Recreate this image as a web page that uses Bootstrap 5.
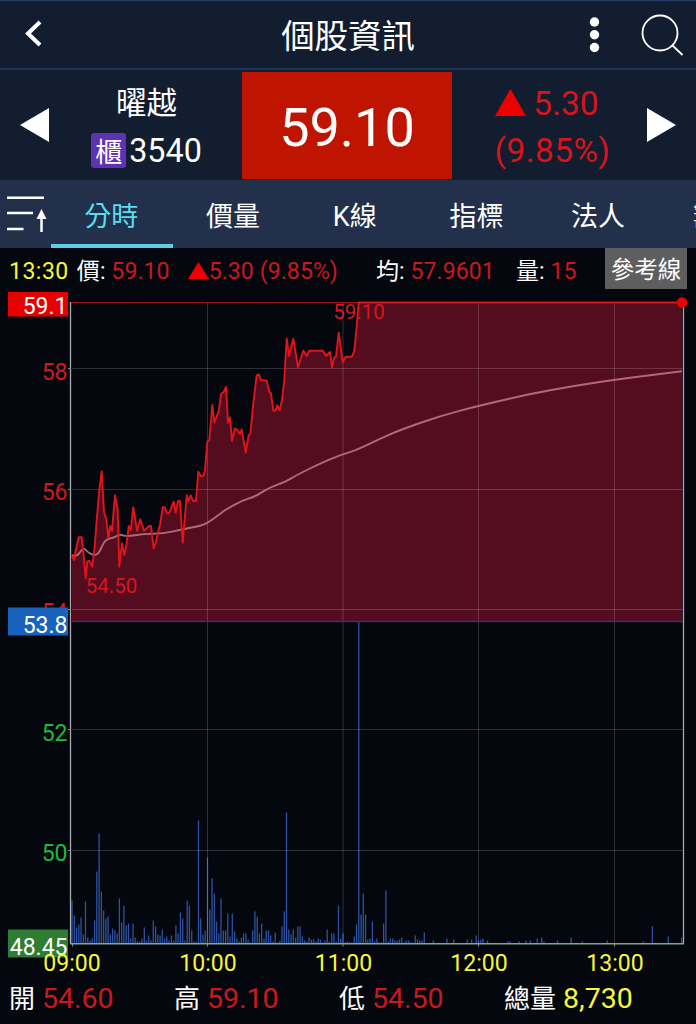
<!DOCTYPE html>
<html lang="zh-Hant">
<head>
    <meta charset="UTF-8" />
    <meta name="viewport" content="width=device-width, initial-scale=1" />
    <title>個股資訊</title>
    <link href="https://cdn.jsdelivr.net/npm/bootstrap@5.3.0/dist/css/bootstrap.min.css" rel="stylesheet" />
    <style>
        body {
            background: #05070f;
            color: #fff;
            font-family: Roboto, "Noto Sans CJK TC", sans-serif;
            line-height: 1;
            overflow: hidden;
        }
        svg { display: block; flex: none; }

        .topbar { height: 70px; background: #121d2f; border-top: 1px solid #263c66; border-bottom: 2px solid #22335a; }
        .topbar h1 { font-size: 33.4px; font-weight: 400; line-height: 1; padding-top: 4px; }
        .side { width: 204px; }

        .quote { height: 110px; background: #121d2f; }
        .quote .side-cell { width: 242px; }
        .stock-block { padding: 7px 0 0 1px; gap: 14px; }
        .stock-name { font-size: 30.5px; }
        .stock-code { font-size: 32.3px; }
        .code-no { margin-left: 3px; padding-top: 1px; }
        .market { width: 35px; height: 35px; background: #5f31b4; border-radius: 3px; font-size: 27px; line-height: 40px; text-align: center; }
        .price-box { width: 210px; height: 107px; padding-top: 5px; background: #bf1500; font-size: 54px; }
        .change { color: #d5141b; font-size: 33.5px; line-height: 47px; padding: 4px 0 0 3px; }
        .change svg { position: relative; top: -1px; }
        .change .percent { letter-spacing: .4px; padding-left: 3px; }

        .tabs { height: 68px; background: #22304b; }
        .tabs .nav-link { flex: 0 0 121.7px; padding: 7px 1px 0 0; color: #fff; font-size: 27px; text-align: center; border-bottom: 4px solid transparent; line-height: 60px; }
        .tabs .nav-link.active { color: #5adcf0; border-color: #5ccfe8; }

        .info { height: 44px; font-size: 23px; padding: 0 9px; letter-spacing: .1px; }
        .info > span { white-space: pre; padding-top: 2px; }
        .i-time { letter-spacing: .5px; }
        .i-price { margin-left: 8px; }
        .i-price + svg { margin-left: 18px; }
        .i-avg { margin-left: 38px; }
        .i-vol { margin-left: 21px; }
        .red { color: #c9181e; }
        .yellow { color: #f7f73b; }
        .ref-btn { width: 82px; height: 41px; background: #5e5e5e; color: #fff; font-size: 23.5px; line-height: 45px; padding: 0; border: 0; border-radius: 0; align-self: flex-start; letter-spacing: 0; }

        #chart text { font-size: 23px; }
        #chart .hi-lo text { font-size: 20.6px; }

        .totals { height: 44px; font-size: 28.5px; padding: 5px 0 0 9px; }
        .totals > span { flex: 0 0 165px; }
        .totals b { font-size: 26px; font-weight: 400; margin-right: 7px; }
    </style>
</head>
<body>
    <header class="topbar d-flex align-items-center justify-content-between">
        <div class="side">
            <svg width="60" height="50" fill="none" stroke="#fff" stroke-width="4"><path d="M40 12 28 23.500 40 35"/></svg>
        </div>
        <h1 class="m-0">個股資訊</h1>
        <div class="side d-flex justify-content-end">
            <svg width="120" height="60" fill="none" stroke="#fff" stroke-width="1.800">
                <g fill="#fff" stroke="none"><circle cx="18.500" cy="17" r="4.700"/><circle cx="18.500" cy="29.700" r="4.700"/><circle cx="18.500" cy="42.500" r="4.700"/></g>
                <circle cx="84" cy="28" r="17.500"/><path d="m96 40 10.500 10"/>
            </svg>
        </div>
    </header>

    <section class="quote d-flex align-items-center">
        <div class="side-cell d-flex align-items-center">
            <svg width="50" height="34"><path d="M20 17 49 0v34z" fill="#fff"/></svg>
            <div class="d-flex flex-column align-items-center flex-fill stock-block">
                <div class="stock-name">曜越</div>
                <div class="d-flex align-items-center stock-code"><span class="market">櫃</span><span class="code-no">3540</span></div>
            </div>
        </div>
        <div class="price-box d-flex align-items-center justify-content-center"><span>59.10</span></div>
        <div class="side-cell d-flex align-items-center flex-fill">
            <div class="change flex-fill text-center">
                <div class="d-flex align-items-center justify-content-center pe-2"><svg width="38" height="27"><path d="M15.500 0 31 27H0z" fill="#ee0000"/></svg><span>5.30</span></div>
                <div class="percent">(9.85%)</div>
            </div>
            <svg width="49" height="34"><path d="M0 0 29 17 0 34z" fill="#fff"/></svg>
        </div>
    </section>

    <nav class="tabs d-flex overflow-hidden">
        <svg width="51" height="68" fill="none" stroke="#fff" stroke-width="2.500">
            <path d="M7 17.700h37M7 33h26M7 49h16.500M41.500 52V36"/><path d="m41.500 29 5 10h-10z" fill="#fff" stroke="none"/>
        </svg>
        <a class="nav-link active">分時</a>
        <a class="nav-link">價量</a>
        <a class="nav-link">K線</a>
        <a class="nav-link">指標</a>
        <a class="nav-link">法人</a>
        <a class="nav-link">籌碼</a>
    </nav>

    <div class="info d-flex align-items-center">
        <span class="yellow i-time">13:30</span>
        <span class="i-price">價: <span class="red">59.10</span></span>
        <svg width="21" height="17"><path d="M10.500 0 21 17H0z" fill="#ee0000"/></svg>
        <span class="red">5.30 (9.85%)</span>
        <span class="i-avg">均: <span class="red">57.9601</span></span>
        <span class="i-vol">量: <span class="red">15</span></span>
        <button class="btn ref-btn ms-auto">參考線</button>
    </div>

    <svg id="chart" width="696" height="688" viewBox="0 292 696 688"></svg>

    <footer class="totals d-flex">
        <span><b>開</b><span class="red">54.60</span></span>
        <span><b>高</b><span class="red">59.10</span></span>
        <span><b>低</b><span class="red">54.50</span></span>
        <span><b>總量</b><span class="yellow">8,730</span></span>
    </footer>

<script>
    const X0 = 72, Y_BASE = 621.5, Y_BOTTOM = 943.5, MINUTE = 2.2583;

    // price line, x,y
    const price = `72,556 74,560 75.3,552.7 76.7,546 78.7,537.3 81.7,537.3 83.3,551.7 85.7,578.3 87.3,561.7 89.3,560.7
        92.3,566.7 94.7,546.7 96.7,520 99.3,490 101.7,471.3 104,511.7 106.3,519.3 108.3,537.3 110.3,526 112,530.7
        115,495.3 117.7,510 119.3,566.7 122,543.3 124.3,555 126.7,543.3 128.7,526 130.7,530 133.3,507.3 137,530.7
        140.3,519.3 144,530.7 149.3,526 151,526 153.7,548.3 156,541.7 158,531.7 160,525 162.7,507.3 164.7,507.3
        166.7,512.7 169.3,512.7 173.7,501.7 175.7,512.7 178,501 180,501 182.7,542.7 186.7,495.3 188.3,501 190.7,495.3
        193,501 196,501 198.3,471.7 200.7,476 203.3,476 205,470 207.3,441.7 209.3,440 212.3,405 214.3,422.7
        216.7,416.7 218.7,411.7 221,394 223.7,392 226,387 228,422.7 230,417.3 232,440.7 235,428.3 237.3,430
        240,434 241.7,429.3 245.7,452.7 248.7,435.3 250.3,434 253.3,403.3 256.7,375.3 258.7,374.3 261,380 266.7,380.7
        269.3,392 271,393.3 273.3,410.7 275.3,410.7 277.3,405.3 279.7,410 282,400 284.3,380 286.7,338.7 289,356
        293.3,338.7 298,367.3 303.3,350.7 306.7,356 309.3,350.7 322.7,350.7 326,356 330,352 332,367.3 334.3,357.3
        336,356.7 338.7,332.7 342.7,362 345.7,356.7 352,356.7 354.3,350.7 356.7,326.7 358.7,302.5 682,302.5`;

    const average = [[72,555],[76.7,557.3],[83.3,547],[88.3,553],[95,555.5],[99,553],[104,541.7],[108.3,538.7],[115,537.3],
        [119.3,534],[126.7,536.7],[143.3,533.7],[163.3,533.7],[183.3,529],[200,526],[208.3,522.7],[220,514],[225,510],
        [241.7,500.7],[255,496.7],[268.3,488],[286.7,481.3],[296.7,475],[323.3,462],[342.7,454.3],[356.7,450],
        [380,438.7],[400,430],[440,416],[478.7,405.7],[533.3,393.3],[566.7,387.3],[614,379.7],[682,371.3]];

    // one bar per minute from 09:00
    const volume = [43,28,16,19,26,9,42,6,3,5,23,72,110,52,33,25,27,9,15,13,10,45,21,38,18,20,5,20,6,2,2,5,16,3,8,3,23,17,
        9,8,14,5,7,3,8,3,18,10,31,25,3,43,38,13,2,2,123,25,9,13,86,34,65,50,22,10,45,13,13,30,7,30,12,5,2,6,10,10,4,1,
        13,32,27,10,20,5,13,13,8,2,11,1,3,17,32,131,14,9,14,6,17,17,7,3,2,6,4,4,2,5,4,1,3,14,2,10,10,2,38,5,10,1,2,1,1,
        7,19,322,29,50,29,4,5,22,2,5,1,1,20,53,2,5,5,3,3,4,6,1,3,3,1,1,8,4,3,3,11];
    const lateVolume = {160: 3, 166: 5, 169: 4, 175: 4, 177: 4, 179: 8, 180: 3, 181: 4, 182: 5, 184: 3, 193: 2, 194: 2,
        198: 2, 201: 3, 203: 3, 206: 5, 208: 6, 209: 2, 215: 3, 221: 6, 226: 2, 237: 3, 253: 2, 257: 17, 264: 7, 270: 6};

    function smooth(points) {
        let d = `M${points[0]}`;
        for (let i = 1; i < points.length - 1; i++) {
            const [x, y] = points[i], [nx, ny] = points[i + 1];
            d += `Q${x},${y} ${(x + nx) / 2},${(y + ny) / 2}`;
        }
        return d + `L${points[points.length - 1]}`;
    }

    function bar(minute, height) {
        const x = X0 + minute * MINUTE;
        return `M${x.toFixed(1)} ${Y_BOTTOM}v${-height}`;
    }

    function label(x, y, text, color, anchor = 'end') {
        return `<text x="${x}" y="${y}" fill="${color}" text-anchor="${anchor}">${text}</text>`;
    }

    function drawChart() {
        const hours = [207.5, 343, 478.5, 614.5];
        const levels = [368.5, 489.5, 609.5, 729.5, 850.5];
        const bars = volume.map((h, i) => bar(i, h)).join('') +
            Object.entries(lateVolume).map(([i, h]) => bar(i, h)).join('');

        document.getElementById('chart').innerHTML = `
            <path d="${bars}" stroke="#2d52a3" stroke-width="1.3"/>
            <path d="M72,${Y_BASE}L${price} 682,${Y_BASE}z" fill="#540c1f"/>
            <path d="${hours.map(x => `M${x} 303V943`).join('')}${levels.map(y => `M72 ${y}H683`).join('')}" stroke="#fff" stroke-opacity=".17"/>
            <path d="M72 ${Y_BASE}H683" stroke="#3d2e68" stroke-width="1.3"/>
            <path d="M71 302.500H683" stroke="#a11218"/>
            <path d="${smooth(average)}" fill="none" stroke="#b0687a" stroke-width="1.9"/>
            <polyline points="${price}" fill="none" stroke="#e0151b" stroke-width="1.9" stroke-linejoin="round"/>
            <path d="M70.500 302V944M683.500 302V944" stroke="#a9a9ae" stroke-width="1.3"/>
            <path d="M70 943.700H684" stroke="#82a58d" stroke-width="1.5"/>
            <path d="M72.500 944v2.500${hours.map(x => `M${x} 944v2.500`).join('')}${levels.map(y => `M68 ${y}h3`).join('')}" stroke="#8a8a90"/>
            <circle cx="682" cy="302.500" r="5.200" fill="#ee0000"/>
            ${label(67.5, 380.4, '58', '#d0191f')}
            ${label(67.5, 500.4, '56', '#d0191f')}
            ${label(67.5, 620.4, '54', '#d0191f')}
            ${label(67.5, 741.4, '52', '#1fb83a')}
            ${label(67.5, 861.4, '50', '#1fb83a')}
            <path d="M8 291h60v25.500H8z" fill="#e60000"/>
            <path d="M8 607.500h60v28H8z" fill="#1762bd"/>
            <path d="M8 929.500h60v28H8z" fill="#2e7d32"/>
            ${label(67.5, 314, '59.1', '#fff')}
            ${label(67.5, 633, '53.8', '#fff')}
            ${label(67.5, 955, '48.45', '#fff')}
            <g class="hi-lo">${label(359, 319, '59.10', '#d8171e', 'middle')}${label(111.5, 593, '54.50', '#d8171e', 'middle')}</g>
            ${label(72, 971, '09:00', '#f7f73b', 'middle')}
            ${label(208, 971, '10:00', '#f7f73b', 'middle')}
            ${label(343.5, 971, '11:00', '#f7f73b', 'middle')}
            ${label(479, 971, '12:00', '#f7f73b', 'middle')}
            ${label(615, 971, '13:00', '#f7f73b', 'middle')}
        `;
    }

    drawChart();
</script>

<script src="https://cdn.jsdelivr.net/npm/bootstrap@5.3.0/dist/js/bootstrap.bundle.min.js"></script>
</body>
</html>
